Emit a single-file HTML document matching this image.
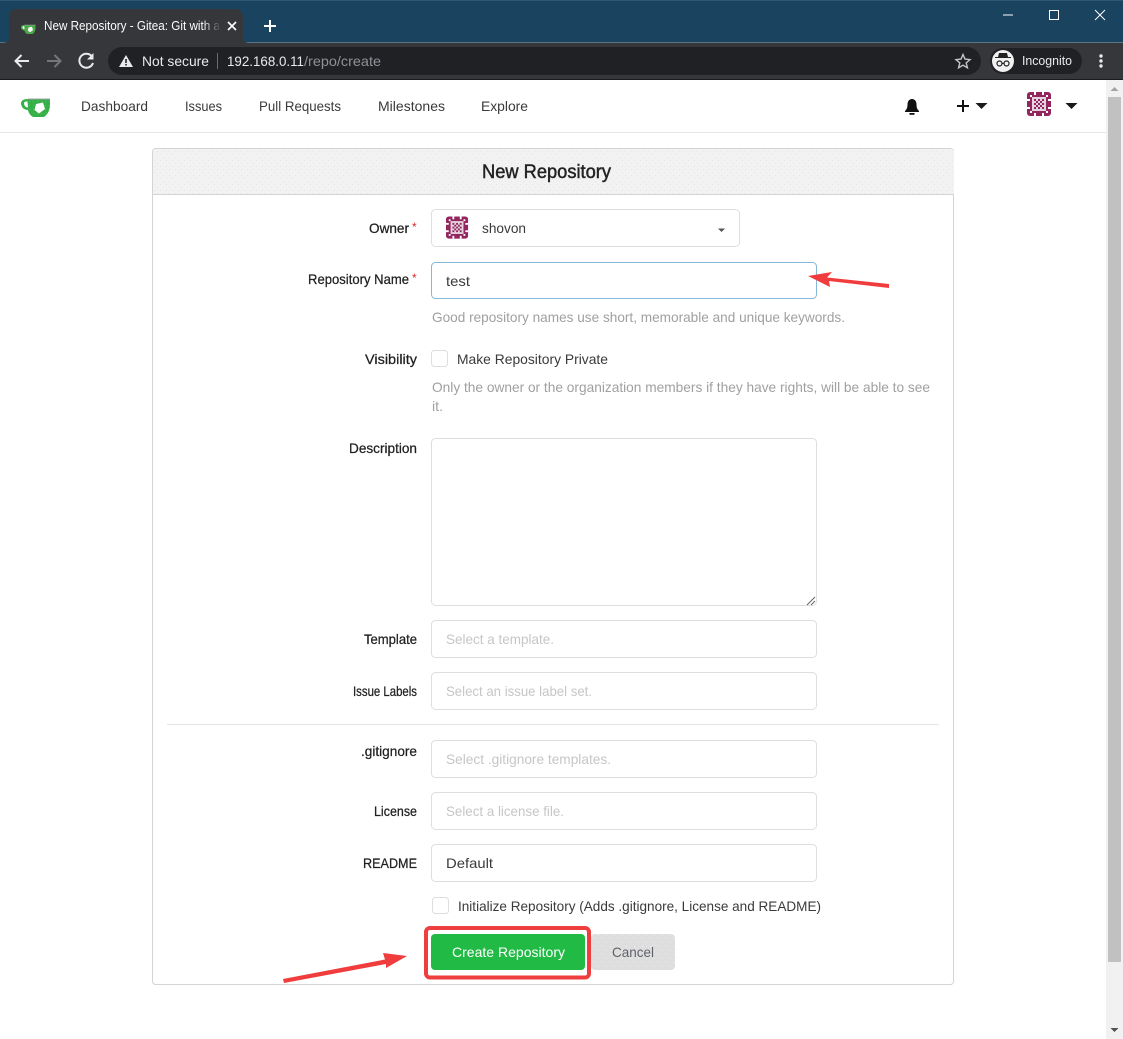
<!DOCTYPE html>
<html><head><meta charset="utf-8"><title>New Repository - Gitea</title>
<style>html,body{margin:0;padding:0;background:#fff;overflow:hidden}svg{display:block}text{font-family:"Liberation Sans",sans-serif;font-size:14px;fill:#212121}.lab text{fill:#1f1f1f;stroke:#1f1f1f;stroke-width:.25}.h{fill:#a0a0a0;font-size:14px}.p{fill:#c6c6c6}.n{fill:#3a3a3a}</style></head><body>
<svg width="1123" height="1039" viewBox="0 0 1123 1039" xmlns="http://www.w3.org/2000/svg">
<defs>
<linearGradient id="fade" x1="0" x2="1"><stop offset="0" stop-color="#fff"/><stop offset=".9" stop-color="#fff"/><stop offset="1" stop-color="#3a3b3f"/></linearGradient>
<pattern id="dith" width="4" height="4" patternUnits="userSpaceOnUse"><rect width="4" height="4" fill="#38b04a"/><rect x="1" y="1" width="1" height="1" fill="#d9822b"/><rect x="3" y="3" width="1" height="1" fill="#c8642c"/></pattern>
<pattern id="hd" width="6" height="6" patternUnits="userSpaceOnUse"><rect width="6" height="6" fill="#f2f2f2"/><rect x="1" y="1" width="1" height="1" fill="#e6e6e6"/><rect x="4" y="4" width="1" height="1" fill="#e6e6e6"/></pattern>
<pattern id="cn" width="8" height="8" patternUnits="userSpaceOnUse"><rect width="8" height="8" fill="#dedede"/><rect x="2" y="2" width="1" height="1" fill="#f0f0f0"/><rect x="6" y="6" width="1" height="1" fill="#f0f0f0"/></pattern>
<g id="av"><rect width="24" height="24" rx="3" fill="#93255f"/><g fill="#fff"><rect x="5" y="5" width="14" height="14" fill="#e4d3dc"/><rect x="7" y="0" width="2" height="3"/><rect x="15" y="0" width="2" height="3"/><rect x="0" y="7" width="3" height="2"/><rect x="21" y="7" width="3" height="2"/><rect x="0" y="15" width="3" height="2"/><rect x="21" y="15" width="3" height="2"/><rect x="7" y="21" width="2" height="3"/><rect x="15" y="21" width="2" height="3"/><rect x="3" y="3" width="2" height="2"/><rect x="19" y="3" width="2" height="2"/><rect x="3" y="19" width="2" height="2"/><rect x="19" y="19" width="2" height="2"/></g><g fill="#93255f"><rect x="7" y="7" width="2" height="2"/><rect x="11" y="7" width="2" height="2"/><rect x="15" y="7" width="2" height="2"/><rect x="9" y="9" width="2" height="2"/><rect x="13" y="9" width="2" height="2"/><rect x="7" y="11" width="2" height="2"/><rect x="11" y="11" width="2" height="2"/><rect x="15" y="11" width="2" height="2"/><rect x="9" y="13" width="2" height="2"/><rect x="13" y="13" width="2" height="2"/><rect x="7" y="15" width="2" height="2"/><rect x="11" y="15" width="2" height="2"/><rect x="15" y="15" width="2" height="2"/></g></g>
<g id="cup"><path d="M28 99H50V105C50 111 47 115 44 117H33C30 115 28.500 113 28 110C24 110 21 107 21 103.500C21 100.500 23.500 99 28 99Z" fill="url(#dith)"/><path d="M24 103c0-1 1-1.500 3.500-1.500L28 107.500C25.500 107.500 24 105.500 24 103Z" fill="#fff"/><path d="M36 104L43 102.500L45 109L39 113.500L34.500 110Z" fill="#fff"/><rect x="28" y="98.500" width="22" height="1" fill="#a5a5a5"/></g>
</defs>
<!-- chrome -->
<rect width="1123" height="43" fill="#19435f"/>
<rect width="1123" height="1" fill="#31566f"/>
<rect y="42" width="1123" height="1" fill="#5b7689"/>
<path d="M2 43C7 43 9 41 9 37V17C9 12 12 9 17 9H235C240 9 243 12 243 17V37C243 41 245 43 250 43Z" fill="#36373b"/>
<rect y="43" width="1123" height="37" fill="#36373b"/>
<rect y="79" width="1123" height="1" fill="#1b1b1d"/>
<use href="#cup" transform="translate(10.500 -24.500) scale(.5)"/>
<text x="44" y="30" textLength="176" lengthAdjust="spacingAndGlyphs" style="font-size:13px;fill:url(#fade)">New Repository - Gitea: Git with a</text>
<path d="M228 22l8 8M236 22l-8 8" stroke="#fff" stroke-width="1.600"/>
<path d="M270 20v12M264 26h12" stroke="#fff" stroke-width="2"/>
<path d="M1003 15h10" stroke="#fff" stroke-width="1"/>
<rect x="1049.500" y="10.500" width="9" height="9" fill="none" stroke="#fff"/>
<path d="M1095 10l10 10M1105 10l-10 10" stroke="#fff" stroke-width="1"/>
<path d="M29 61H16M21.500 55L15.500 61L21.500 67" fill="none" stroke="#e8eaed" stroke-width="2"/>
<path d="M47 61H60M54.500 55L60.500 61L54.500 67" fill="none" stroke="#74767a" stroke-width="2"/>
<path d="M92 56.500A7 7 0 1 0 93 63" fill="none" stroke="#e8eaed" stroke-width="2"/><path d="M93.500 53v6.500h-6.500z" fill="#e8eaed"/>
<rect x="108" y="47" width="873" height="28" rx="14" fill="#202124"/>
<path d="M126 55l7 12h-14z" fill="#e8eaed"/><rect x="125.200" y="59" width="1.600" height="4" fill="#202124"/><rect x="125.200" y="64" width="1.600" height="1.500" fill="#202124"/>
<text x="142" y="66" textLength="67" lengthAdjust="spacingAndGlyphs" style="fill:#e8eaed">Not secure</text>
<rect x="217" y="53" width="1" height="16" fill="#6b6c70"/>
<text x="227" y="66" textLength="77" lengthAdjust="spacingAndGlyphs" style="fill:#e8eaed">192.168.0.11</text>
<text x="304" y="66" textLength="77" lengthAdjust="spacingAndGlyphs" style="fill:#8f9196">/repo/create</text>
<path d="M963 54.500l2 4.600 5 .5-3.800 3.300 1.200 4.900-4.400-2.600-4.400 2.600 1.200-4.900-3.800-3.300 5-.5z" fill="none" stroke="#c4c6c9" stroke-width="1.400"/>
<rect x="990" y="48" width="92" height="26" rx="13" fill="#202124"/>
<circle cx="1003" cy="61" r="11" fill="#f1f1f1"/>
<path d="M999 53h8l1 4h3v1h-16v-1h3z" fill="#222"/><circle cx="999.500" cy="63.500" r="2.500" fill="none" stroke="#222" stroke-width="1.200"/><circle cx="1006.500" cy="63.500" r="2.500" fill="none" stroke="#222" stroke-width="1.200"/><path d="M1002 63.500h2" stroke="#222"/>
<text x="1022" y="65" textLength="50" lengthAdjust="spacingAndGlyphs" style="font-size:13px;fill:#e8eaed">Incognito</text>
<g fill="#e8eaed"><circle cx="1101" cy="56" r="1.700"/><circle cx="1101" cy="61" r="1.700"/><circle cx="1101" cy="66" r="1.700"/></g>
<!-- scrollbar -->
<rect x="1106" y="80" width="17" height="959" fill="#f1f1f1"/>
<rect x="1108" y="97" width="13" height="865" fill="#c1c1c1"/>
<path d="M1114.500 87l4 4h-8z" fill="#a3a3a3"/><path d="M1110.500 1028h8l-4 4z" fill="#505050"/>
<!-- nav -->
<rect x="0" y="132" width="1106" height="1" fill="#e6e6e6"/>
<use href="#cup"/>
<text x="81" y="111" textLength="67" lengthAdjust="spacingAndGlyphs" class="n">Dashboard</text>
<text x="185" y="111" textLength="37" lengthAdjust="spacingAndGlyphs" class="n">Issues</text>
<text x="259" y="111" textLength="82" lengthAdjust="spacingAndGlyphs" class="n">Pull Requests</text>
<text x="378" y="111" textLength="67" lengthAdjust="spacingAndGlyphs" class="n">Milestones</text>
<text x="481" y="111" textLength="47" lengthAdjust="spacingAndGlyphs" class="n">Explore</text>
<path d="M912 99c3 0 4.500 2.500 4.500 5.500 0 3.500 1 5 2.500 6.500v1h-14v-1c1.500-1.500 2.500-3 2.500-6.500 0-3 1.500-5.500 4.500-5.500z" fill="#111"/><rect x="909.500" y="113" width="5" height="1.800" fill="#111"/>
<path d="M963 100v12M957 106h12" stroke="#111" stroke-width="2"/>
<path d="M975.500 103h12l-6 6z" fill="#1a1a1a"/>
<use href="#av" x="1027" y="92"/>
<path d="M1065.500 103h12l-6 6z" fill="#1a1a1a"/>
<!-- segment -->
<rect x="152.500" y="148.500" width="801" height="836" rx="3" fill="#fff" stroke="#d4d4d5"/>
<path d="M153 152a3 3 0 0 1 3-3h795a3 3 0 0 1 3 3v42H153z" fill="url(#hd)"/>
<rect x="153" y="194" width="800" height="1" fill="#d4d4d5"/>
<text x="482" y="178" textLength="129" lengthAdjust="spacingAndGlyphs" style="font-size:19px;fill:#222;stroke:#222;stroke-width:.45">New Repository</text>
<!-- labels -->
<g class="lab">
<text x="369" y="233" textLength="40" lengthAdjust="spacingAndGlyphs">Owner</text>
<text x="308" y="284" textLength="101" lengthAdjust="spacingAndGlyphs">Repository Name</text>
<text x="365" y="364" textLength="52" lengthAdjust="spacingAndGlyphs">Visibility</text>
<text x="349" y="453" textLength="68" lengthAdjust="spacingAndGlyphs">Description</text>
<text x="364" y="644" textLength="53" lengthAdjust="spacingAndGlyphs">Template</text>
<text x="353" y="696" textLength="64" lengthAdjust="spacingAndGlyphs">Issue Labels</text>
<text x="361" y="756" textLength="56" lengthAdjust="spacingAndGlyphs">.gitignore</text>
<text x="374" y="816" textLength="43" lengthAdjust="spacingAndGlyphs">License</text>
<text x="363" y="868" textLength="54" lengthAdjust="spacingAndGlyphs">README</text>
</g>
<text x="412" y="231" style="font-size:12px;fill:#db2828">*</text>
<text x="412" y="282" style="font-size:12px;fill:#db2828">*</text>
<!-- inputs -->
<g fill="#fff" stroke="#dedede">
<rect x="431.500" y="209.500" width="308" height="37" rx="4"/>
<rect x="431.500" y="438.500" width="385" height="167" rx="4"/>
<rect x="431.500" y="620.500" width="385" height="37" rx="4"/>
<rect x="431.500" y="672.500" width="385" height="37" rx="4"/>
<rect x="431.500" y="740.500" width="385" height="37" rx="4"/>
<rect x="431.500" y="792.500" width="385" height="37" rx="4"/>
<rect x="431.500" y="844.500" width="385" height="37" rx="4"/>
<rect x="431.500" y="350.500" width="16" height="16" rx="3"/>
<rect x="432.500" y="897.500" width="16" height="16" rx="3"/>
</g>
<rect x="431.500" y="262.500" width="385" height="36" rx="4" fill="#fff" stroke="#85b7d9"/>
<path d="M815 597l-8 8M815 601l-4 4" stroke="#666" stroke-width="1"/>
<use href="#av" transform="translate(446 216.500) scale(.92)"/>
<text x="482" y="233" textLength="44" lengthAdjust="spacingAndGlyphs" class="n">shovon</text>
<path d="M718 228.500h7l-3.500 3.500z" fill="#555"/>
<text x="446" y="286" textLength="24" lengthAdjust="spacingAndGlyphs" class="n">test</text>
<text x="432" y="322" textLength="413" lengthAdjust="spacingAndGlyphs" class="h">Good repository names use short, memorable and unique keywords.</text>
<text x="457" y="364" textLength="151" lengthAdjust="spacingAndGlyphs" class="n">Make Repository Private</text>
<text x="432" y="392" textLength="498" lengthAdjust="spacingAndGlyphs" class="h">Only the owner or the organization members if they have rights, will be able to see</text>
<text x="432" y="411" textLength="11" lengthAdjust="spacingAndGlyphs" class="h">it.</text>
<text x="446" y="644" textLength="108" lengthAdjust="spacingAndGlyphs" class="p">Select a template.</text>
<text x="446" y="696" textLength="146" lengthAdjust="spacingAndGlyphs" class="p">Select an issue label set.</text>
<rect x="167" y="724" width="772" height="1" fill="#e4e4e4"/>
<text x="446" y="764" textLength="165" lengthAdjust="spacingAndGlyphs" class="p">Select .gitignore templates.</text>
<text x="446" y="816" textLength="118" lengthAdjust="spacingAndGlyphs" class="p">Select a license file.</text>
<text x="446" y="868" textLength="47" lengthAdjust="spacingAndGlyphs" class="n">Default</text>
<text x="458" y="911" textLength="363" lengthAdjust="spacingAndGlyphs" class="n">Initialize Repository (Adds .gitignore, License and README)</text>
<!-- buttons -->
<rect x="591" y="934" width="84" height="36" rx="4" fill="url(#cn)"/>
<text x="612" y="957" textLength="42" lengthAdjust="spacingAndGlyphs" style="fill:#5f6368">Cancel</text>
<rect x="426" y="928" width="163" height="49.500" rx="4" fill="#fff" stroke="#ef3e3e" stroke-width="4"/>
<rect x="431" y="934" width="154" height="36" rx="4" fill="#21ba45"/>
<text x="452" y="957" textLength="113" lengthAdjust="spacingAndGlyphs" style="fill:#fff">Create Repository</text>
<!-- arrows -->
<path d="M808 276L832 272L827 277.500L889 284L889 288L829 281L830 287Z" fill="#f03c3c"/>
<path d="M283 979L385 959.500L383 953L407 956L386 968L386 964L284 983Z" fill="#f03c3c"/>
</svg>
</body></html>
